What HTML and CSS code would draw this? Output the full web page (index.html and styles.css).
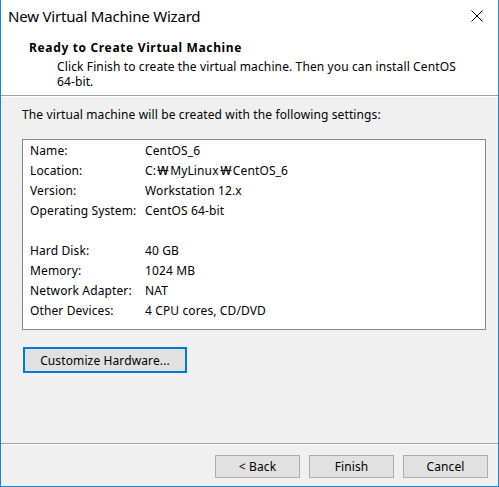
FILE: index.html
```html
<!DOCTYPE html>
<html>
<head>
<meta charset="utf-8">
<link rel="stylesheet" href="styles.css">
</head>
<body>
<div class="window">
  <div class="titlebar">
    <span class="title">New Virtual Machine Wizard</span>
    <span class="close">
      <svg width="12" height="12" viewBox="0 0 12 12"><path d="M0.5 0.5 L11.5 11.5 M11.5 0.5 L0.5 11.5" stroke="#000" stroke-width="1" fill="none"/></svg>
    </span>
  </div>
  <div class="header">
    <div class="h-title">Ready to Create Virtual Machine</div>
    <div class="h-sub">Click Finish to create the virtual machine. Then you can install CentOS 64-bit.</div>
  </div>
  <div class="sep"></div>
  <div class="body">
    <div class="intro">The virtual machine will be created with the following settings:</div>
    <div class="box">
      <div class="row"><span class="lbl">Name:</span><span>CentOS_6</span></div>
      <div class="row"><span class="lbl">Location:</span><span>C:<span class="won">₩</span>MyLinux<span class="won">₩</span>CentOS_6</span></div>
      <div class="row"><span class="lbl">Version:</span><span>Workstation 12.x</span></div>
      <div class="row"><span class="lbl">Operating System:</span><span>CentOS 64-bit</span></div>
      <div class="row"><span class="lbl"></span><span></span></div>
      <div class="row"><span class="lbl">Hard Disk:</span><span>40 GB</span></div>
      <div class="row"><span class="lbl">Memory:</span><span>1024 MB</span></div>
      <div class="row"><span class="lbl">Network Adapter:</span><span>NAT</span></div>
      <div class="row"><span class="lbl">Other Devices:</span><span>4 CPU cores, CD/DVD</span></div>
    </div>
    <div class="custom-wrap"><button class="btn custom">Customize Hardware...</button></div>
  </div>
  <div class="sep"></div>
  <div class="footer">
    <button class="btn">&lt; Back</button>
    <button class="btn">Finish</button>
    <button class="btn">Cancel</button>
  </div>
</div>
</body>
</html>
```
FILE: styles.css
```css
html, body {
  margin: 0;
  padding: 0;
  background: #f0f0f0;
}
body {
  font-family: "Noto Sans", "Open Sans", sans-serif;
  font-size: 12px;
  letter-spacing: 0.12px;
  color: #000;
}
.window {
  width: 499px;
  height: 487px;
  box-sizing: border-box;
  border-left: 1px solid #1883d7;
  border-right: 1px solid #1883d7;
  border-bottom: 1px solid #1883d7;
  display: flex;
  flex-direction: column;
  background: #f0f0f0;
}
.titlebar {
  height: 33px;
  background: #fff;
  display: flex;
  align-items: center;
  justify-content: space-between;
  padding-left: 7px;
  padding-right: 15px;
}
.title {
  font-size: 15px;
  letter-spacing: -0.2px;
  margin-top: -1px;
}
.close {
  display: flex;
  margin-top: -1px;
}
.header {
  height: 62px;
  background: #fff;
  box-sizing: border-box;
  padding-top: 6px;
  padding-left: 28px;
  padding-right: 30px;
}
.h-title {
  font-weight: bold;
  line-height: 17px;
  letter-spacing: 0.65px;
}
.h-sub {
  padding-left: 28px;
  line-height: 15px;
  margin-top: 3px;
  padding-right: 8px;
}
.sep {
  height: 1px;
  background: #a0a0a0;
  border-bottom: 1px solid #fff;
}
.body {
  flex: 1;
  padding: 9px 12px 0 21px;
}
.intro {
  line-height: 18px;
}
.box {
  margin-top: 15px;
  background: #fff;
  border: 1px solid #828790;
  padding: 1px 0 8px 7px;
}
.row {
  display: grid;
  grid-template-columns: 115px 1fr;
  height: 20px;
  line-height: 20px;
}
.won {
  display: inline-block;
  margin: 0 3px 0 3px;
  transform: scaleX(1.4);
}
.custom-wrap {
  margin-top: 17px;
  padding-left: 1px;
}
.btn {
  font-family: inherit;
  font-size: 12px;
  letter-spacing: 0.12px;
  color: #000;
  background: #e1e1e1;
  border: 1px solid #adadad;
  width: 85px;
  height: 23px;
  padding: 0;
  margin: 0;
}
.custom {
  width: 164px;
  height: 26px;
  border: 2px solid #0078d7;
}
.footer {
  height: 41px;
  display: flex;
  justify-content: flex-end;
  align-items: flex-start;
  gap: 9px;
  padding-top: 10px;
  padding-right: 10px;
  box-sizing: border-box;
}
```
